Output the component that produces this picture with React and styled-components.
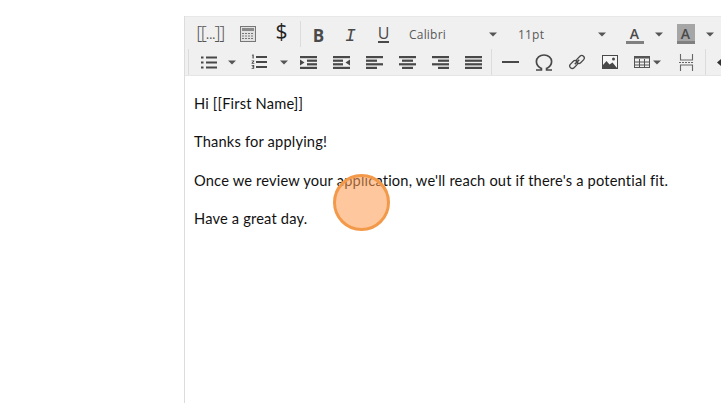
import React from "react";
import styled, { createGlobalStyle } from "styled-components";

const Global = createGlobalStyle`
  html, body { margin: 0; padding: 0; background: #fff; overflow: hidden; }
  #root { width: 721px; height: 403px; overflow: hidden; }
`;
const Page = styled.div`
  position: relative;
  width: 721px;
  height: 403px;
  padding: 16px 0 0 184px;
  box-sizing: border-box;
  overflow: hidden;
`;
const Editor = styled.div`
  width: 537px;
  height: 387px;
  box-sizing: border-box;
  border-left: 1px solid #dcdcdc;
  display: flex;
  flex-direction: column;
`;
const Toolbar = styled.div`
  height: 60px;
  flex: none;
  background: #f0f0f0;
  border-top: 1px solid #e8e8e8;
  border-bottom: 1px solid #e6e6e6;
  box-sizing: border-box;
  padding-top: 3px;
  display: flex;
  flex-direction: column;
  overflow: hidden;
`;
const Row = styled.div`
  height: 28px;
  flex: none;
  display: flex;
  align-items: center;
  padding-left: ${(p) => p.$pad}px;
  white-space: nowrap;
`;
const Btn = styled.div`
  width: ${(p) => p.$w}px;
  height: 26px;
  flex: none;
  display: flex;
  align-items: center;
  justify-content: center;
  gap: ${(p) => p.$gap ?? 0}px;
  color: #444;
`;
const Sep = styled.div`
  width: 1px;
  height: 26px;
  flex: none;
  background: #dcdcdc;
  margin: 0 ${(p) => p.$r ?? 3}px 0 ${(p) => p.$l ?? 2}px;
`;
const Select = styled.div`
  width: ${(p) => p.$w}px;
  margin-right: ${(p) => p.$mr ?? 0}px;
  height: 26px;
  flex: none;
  display: flex;
  align-items: center;
  justify-content: space-between;
  padding: 0 3px 0 9px;
  box-sizing: border-box;
  font: 12px "Open Sans", sans-serif;
  letter-spacing: 0.2px;
  color: #595959;
`;
const Content = styled.div`
  flex: 1;
  padding: 17.5px 0 0 9px;
  font: 14.67px/19.33px Lato, "Open Sans", sans-serif;
  font-variant-ligatures: none;
  letter-spacing: 0.17px;
  color: #111;
`;
const Para = styled.p`
  margin: 0 0 19.33px;
  white-space: nowrap;
`;
const Bracket = styled.span`
  font: 300 19px/1 "Open Sans", sans-serif;
  letter-spacing: -1.45px;
  color: #555;
  margin-top: -3px;
`;
const Dollar = styled.span`
  font: 21px/1 "Open Sans", sans-serif;
  color: #222;
  margin-top: -5px;
`;
const Bold = styled.span`
  font: 700 17px/1 "Open Sans", sans-serif;
  color: #4a4a4a;
  margin: 3px 0 0 2px;
`;
const Italic = styled.span`
  font: italic 400 18px/1 "Liberation Mono", monospace;
  color: #4a4a4a;
  margin-top: 3px;
`;
const Under = styled.span`
  font: 400 16px/14px "Open Sans", sans-serif;
  color: #4a4a4a;
  border-bottom: 2px solid #4a4a4a;
  padding-bottom: 1px;
  margin-top: 1px;
`;
const ColorA = styled.div`
  width: 18px;
  height: 20px;
  margin-left: ${(p) => p.$ml ?? 0}px;
  margin-top: -1px;
  box-sizing: border-box;
  background: ${(p) => (p.$filled ? "#a6a6a6" : "transparent")};
  border-bottom: 3px solid #808080;
  font: 600 14px/19px "Open Sans", sans-serif;
  color: #4a4a4a;
  text-align: center;
`;
const Pulse = styled.div`
  position: absolute;
  left: 333px;
  top: 174px;
  width: 57px;
  height: 57px;
  box-sizing: border-box;
  border-radius: 50%;
  background: rgba(255, 155, 80, 0.56);
  border: 3px solid #f2994a;
`;

const Caret = () => (
  <svg width="8" height="5" viewBox="0 0 8 5"><path d="M0 0.5h8L4 4.5z" fill="#555" /></svg>
);
const Lines = ({ rows, thick = 2.2 }) => (
  <svg width="17" height="13" viewBox="0 0 17 13">
    {rows.map(([x, w], i) => (
      <rect key={i} x={x} y={i * 3.6} width={w} height={thick} fill="#484848" />
    ))}
  </svg>
);
const full = [0, 17];
const alignLeft = [[0, 17], [0, 11], [0, 17], [0, 11]];
const alignCenter = [[0, 17], [3, 11], [0, 17], [3, 11]];
const alignRight = [[0, 17], [6, 11], [0, 17], [6, 11]];
const justify = [full, full, full, full];

const Calc = () => (
  <svg width="16" height="16" viewBox="0 0 16 16" fill="none" stroke="#777">
    <rect x="0.5" y="0.5" width="15" height="15" fill="#e2e2e2" />
    <rect x="2" y="2" width="12" height="3" fill="#8a8a8a" stroke="none" />
    <path d="M2 7.500h12M2 10h12M2 12.500h12" strokeDasharray="2 1" />
  </svg>
);
const Bullet = () => (
  <svg width="16" height="13" viewBox="0 0 16 13" fill="#484848">
    <rect x="5" y="0.5" width="11" height="2" /><rect x="5" y="5.5" width="11" height="2" /><rect x="5" y="10.500" width="11" height="2" />
    <rect x="0" y="0.5" width="2.500" height="2" /><rect x="0" y="5.5" width="2.500" height="2" /><rect x="0" y="10.500" width="2.500" height="2" />
  </svg>
);
const Numbered = () => (
  <svg width="16" height="16" viewBox="0 0 16 16" fill="#484848">
    <rect x="5" y="2" width="11" height="2" /><rect x="5" y="7" width="11" height="2" /><rect x="5" y="12" width="11" height="2" />
    <path d="M1.500 0.500h1.200v4H1.500V1.600H.7zM.6 6.500h2.600v1L1.800 9h1.500v.8H.6v-.8l1.600-1.700H.6zM.6 11h2.600v3.800H.6V14h1.600v-.7H1v-.7h1.200v-.8H.6z" />
  </svg>
);
const Indent = ({ flip }) => (
  <svg width="17" height="13" viewBox="0 0 17 13" fill="#484848" style={flip ? { transform: "scaleX(-1)" } : undefined}>
    <rect width="17" height="2.200" /><rect x="7" y="3.600" width="10" height="2.200" /><rect x="7" y="7.200" width="10" height="2.200" /><rect y="10.800" width="17" height="2.200" />
    <path d="M0 3.500l4.500 3-4.500 3z" />
  </svg>
);
const Rule = () => (<svg width="17" height="4" viewBox="0 0 17 4"><rect y="1" width="17" height="2" fill="#484848" /></svg>);
const Omega = () => (
  <svg width="18" height="17" viewBox="0 0 18 17" fill="none" stroke="#484848" strokeWidth="1.700">
    <path d="M1 16h5.400v-1.600C3.300 13 1.400 10.600 1.400 7.600 1.400 3.700 4.700 1 9 1s7.600 2.700 7.600 6.600c0 3-1.900 5.400-5 6.800V16H17" />
  </svg>
);
const Link = () => (
  <svg width="16" height="16" viewBox="0 0 16 16" fill="none" stroke="#484848" strokeWidth="1.300">
    <rect x="0.200" y="8" width="9" height="5" rx="2.500" transform="rotate(-45 4.700 10.500)" />
    <rect x="6.800" y="3" width="9" height="5" rx="2.500" transform="rotate(-45 11.300 5.500)" />
    <path d="M5.800 10.200l4.400-4.400" strokeWidth="1.600" />
  </svg>
);
const Picture = () => (
  <svg width="16" height="14" viewBox="0 0 16 14">
    <rect x="0.500" y="0.500" width="15" height="13" fill="#f6f6f6" stroke="#484848" />
    <path d="M1 13V10l3.500-4 3 3.500 3-2 4.500 5.500z" fill="#484848" />
    <circle cx="11.500" cy="4" r="1.500" fill="#484848" />
  </svg>
);
const Grid = () => (
  <svg width="16" height="12" viewBox="0 0 16 12" fill="none" stroke="#555">
    <rect x="0.500" y="0.500" width="15" height="11" />
    <path d="M0 1.500h16" strokeWidth="2" />
    <path d="M0 6h16M0 9h16M5.500 3v9M10.500 3v9" />
  </svg>
);
const PageBreak = () => (
  <svg width="15" height="17" viewBox="0 0 15 17" fill="none" stroke="#666" strokeWidth="1.100">
    <path d="M1.500 0v6h12V0M1.500 17v-6h12v6" />
    <path d="M0 8.500h15" strokeDasharray="2 1" strokeWidth="1" />
  </svg>
);
const Back = () => (<svg width="6" height="9" viewBox="0 0 6 9"><path d="M5 0v9L0 4.500z" fill="#333" /></svg>);

export default function App() {
  return (
    <Page>
      <Global />
      <Editor>
        <Toolbar>
          <Row $pad={5}>
            <Btn $w={40}><Bracket>[[...]]</Bracket></Btn>
            <Btn $w={35}><Calc /></Btn>
            <Btn $w={33}><Dollar>$</Dollar></Btn>
            <Sep $l={2} $r={0} />
            <Btn $w={33}><Bold>B</Bold></Btn>
            <Btn $w={33}><Italic>I</Italic></Btn>
            <Btn $w={33}><Under>U</Under></Btn>
            <Select $w={100} $mr={9}><span>Calibri</span><Caret /></Select>
            <Select $w={100} $mr={10}><span>11pt</span><Caret /></Select>
            <Btn $w={30}><ColorA $ml={1}>A</ColorA></Btn>
            <Btn $w={20}><Caret /></Btn>
            <Btn $w={31}><ColorA $filled $ml={2}>A</ColorA></Btn>
            <Btn $w={20}><Caret /></Btn>
          </Row>
          <Row $pad={3}>
            <Sep $l={0} $r={3} />
            <Btn $w={34}><Bullet /></Btn>
            <Btn $w={12}><Caret /></Btn>
            <Btn $w={4} />
            <Btn $w={34}><Numbered /></Btn>
            <Btn $w={16}><Caret /></Btn>
            <Btn $w={33}><Indent /></Btn>
            <Btn $w={33}><Indent flip /></Btn>
            <Btn $w={33}><Lines rows={alignLeft} /></Btn>
            <Btn $w={33}><Lines rows={alignCenter} /></Btn>
            <Btn $w={33}><Lines rows={alignRight} /></Btn>
            <Btn $w={33}><Lines rows={justify} /></Btn>
            <Sep $l={1} $r={2} />
            <Btn $w={33}><Rule /></Btn>
            <Btn $w={33}><Omega /></Btn>
            <Btn $w={33}><Link /></Btn>
            <Btn $w={33}><Picture /></Btn>
            <Btn $w={42} $gap={3}><Grid /><Caret /></Btn>
            <Btn $w={36}><PageBreak /></Btn>
            <Sep $l={1} $r={11} />
            <Btn $w={6}><Back /></Btn>
          </Row>
        </Toolbar>
        <Content>
          <Para>Hi [[First Name]]</Para>
          <Para>Thanks for applying!</Para>
          <Para>Once we review your application, we'll reach out if there's a potential fit.</Para>
          <Para>Have a great day.</Para>
        </Content>
      </Editor>
      <Pulse />
    </Page>
  );
}
